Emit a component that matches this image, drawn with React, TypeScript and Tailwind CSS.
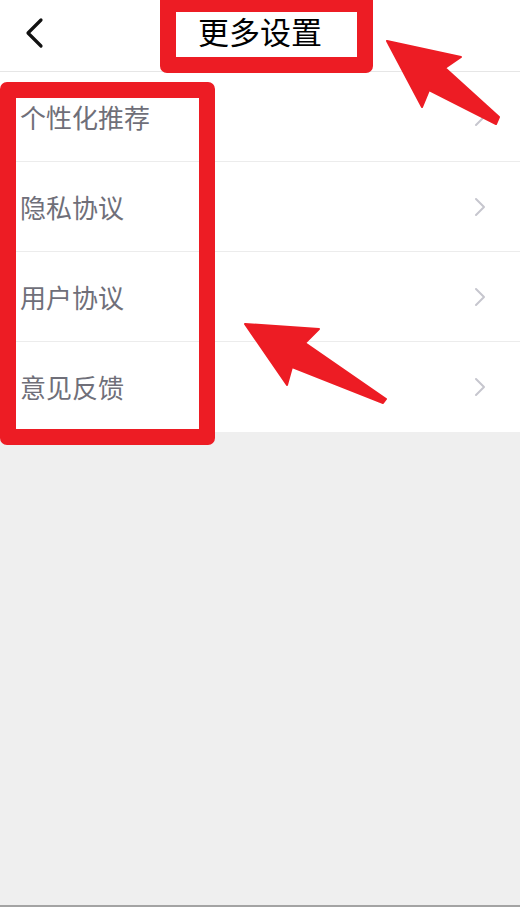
import React from "react";

const items = ["个性化推荐", "隐私协议", "用户协议", "意见反馈"];

const Chevron = () => (
  <svg width="12" height="20" viewBox="0 0 12 20" fill="none">
    <path d="M2 2 L10 10 L2 18" stroke="#c6c6ce" strokeWidth="2" strokeLinecap="round" strokeLinejoin="round" />
  </svg>
);

const App = () => {
  return (
    <div
      className="relative flex min-h-[907px] w-full flex-col bg-[#efefef]"
      style={{ fontFamily: '"Noto Sans CJK SC", "Noto Sans", sans-serif' }}
    >
      {/* header */}
      <div className="grid h-[72px] grid-cols-[1fr_auto_1fr] items-center border-b border-[#e6e6e6] bg-white">
        <button className="mb-[6px] ml-[24px] flex h-[40px] w-[24px] items-center">
          <svg width="20" height="32" viewBox="0 0 20 32" fill="none">
            <path d="M17 3 L4 16 L17 29" stroke="#111" strokeWidth="3.2" strokeLinecap="round" strokeLinejoin="round" />
          </svg>
        </button>
        <h1 className="pb-[10px] text-[31px] leading-none text-black">更多设置</h1>
        <div />
      </div>

      {/* list */}
      <ul className="bg-white">
        {items.map((label, i) => (
          <li key={label} className="pl-[16px]">
            <div
              className={
                "flex h-[90px] items-center justify-between pr-[34px] " +
                (i < items.length - 1 ? "border-b border-[#ececec]" : "")
              }
            >
              <span className="pl-[4px] text-[26px] leading-none text-[#6f6f79]">{label}</span>
              <Chevron />
            </div>
          </li>
        ))}
      </ul>

      <div className="flex-1" />
      <div className="h-[2px] bg-[#a3a3a3]" />

      {/* red annotations */}
      <div className="pointer-events-none absolute left-[160px] top-0 h-[73px] w-[213px] rounded-b-[7px] border-x-[16px] border-b-[16px] border-t-[12px] border-[#ed1c24]" />
      <div className="pointer-events-none absolute left-0 top-[82px] h-[363px] w-[215px] rounded-[7px] border-[16px] border-[#ed1c24]" />
      <svg className="pointer-events-none absolute left-0 top-0" width="520" height="907">
        <polygon
          points="387,41 461,57 445,68 499,117 496,124 429,90 422,107"
          fill="#ed1c24"
          stroke="#ed1c24"
          strokeWidth="2"
          strokeLinejoin="round"
        />
        <polygon
          points="245,324 319,329 305,343 386,399 383,403 292,367 287,385"
          fill="#ed1c24"
          stroke="#ed1c24"
          strokeWidth="2"
          strokeLinejoin="round"
        />
      </svg>
    </div>
  );
};

export default App;
